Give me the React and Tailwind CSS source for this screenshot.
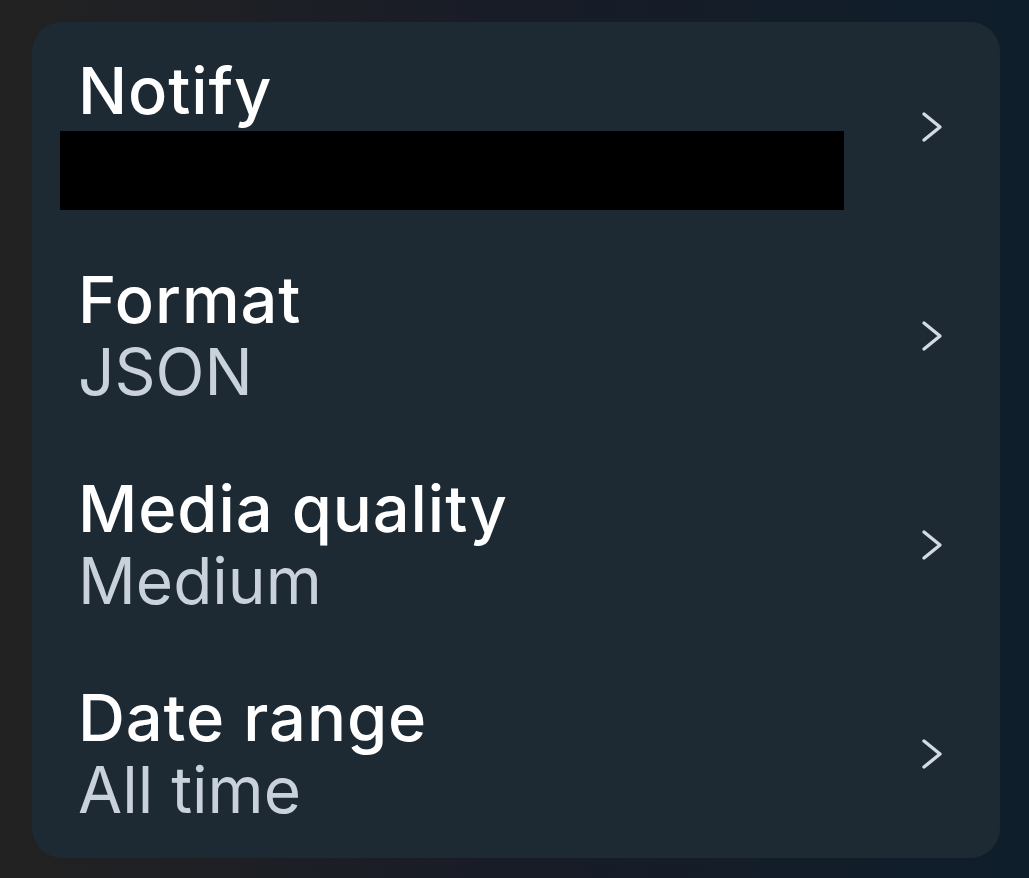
// App.jsx — export settings list card
import React from 'react';

function Chevron() {
  return (
    <svg width="24" height="34" viewBox="0 0 24 34" fill="none" className="shrink-0">
      <polyline points="4,4 20,17 4,30" stroke="#d3dae2" strokeWidth="3.4" strokeLinecap="round" strokeLinejoin="round" />
    </svg>
  );
}

const rows = [
  { title: 'Notify', value: null },
  { title: 'Format', value: 'JSON' },
  { title: 'Media quality', value: 'Medium' },
  { title: 'Date range', value: 'All time' },
];

export default function App() {
  return (
    <div
      className="h-[878px] w-full bg-gradient-to-r from-[#222222] via-[#181c27] to-[#0e1e2b] pt-[22px] pl-[32px] pr-[29px]"
      style={{ fontFamily: 'Inter, "Noto Sans", sans-serif' }}
    >
      <div className="rounded-[30px] bg-[#1d2a33]">
        {rows.map((r) => (
          <div key={r.title} className="flex h-[209px] items-center justify-between pl-[46px] pr-[56px]">
            <div className="flex flex-col">
              <span className="text-[65px] leading-[72px] font-medium tracking-[0.9px] text-white">{r.title}</span>
              {r.value ? (
                <span className="text-[64px] leading-[72px] text-[#c9d1da]">{r.value}</span>
              ) : (
                <div className="relative h-[72px]">
                  <div className="absolute top-[4px] left-[-18px] h-[79px] w-[784px] bg-black" />
                </div>
              )}
            </div>
            <Chevron />
          </div>
        ))}
      </div>
    </div>
  );
}
